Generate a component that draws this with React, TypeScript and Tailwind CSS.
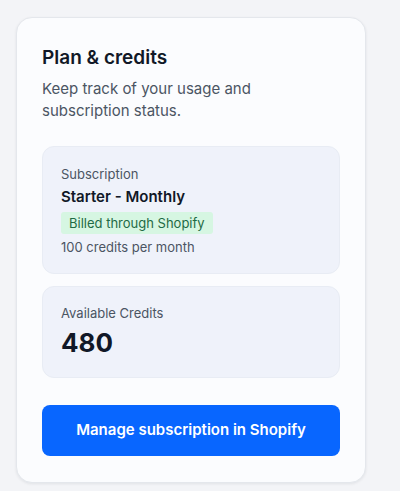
export default function App() {
  return (
    <div
      className="min-h-screen bg-[#f3f4f7] pl-4 pt-[17px]"
      style={{ fontFamily: "Inter, 'Noto Sans', sans-serif" }}
    >
      <div className="w-[350px] rounded-2xl border border-[#e4e7ec] bg-[#fbfcfe] px-[25px] pb-[26px] pt-[26px] shadow-[0_1px_3px_rgba(16,24,40,0.08)]">
        <h2 className="text-[19px] font-semibold leading-7 text-[#111827]">
          Plan &amp; credits
        </h2>
        <p className="mt-[6px] text-[15px] leading-[22px] text-[#4b5563]">
          Keep track of your usage and subscription status.
        </p>

        <div className="mt-[24px] rounded-xl border border-[#e8ecf4] bg-[#eff2fa] px-[18px] pb-[16px] pt-[17px]">
          <div className="text-[13px] leading-5 text-[#4b5563]">Subscription</div>
          <div className="mt-[3px] text-[15px] font-semibold leading-5 text-[#111827]">
            Starter - Monthly
          </div>
          <span className="mt-[5px] inline-block rounded-[3px] bg-[#d6f6e2] px-2 py-[1px] text-[13px] leading-5 text-[#1f6b45]">
            Billed through Shopify
          </span>
          <div className="mt-[3px] text-[13px] leading-5 text-[#4b5563]">
            100 credits per month
          </div>
        </div>

        <div className="mt-3 rounded-xl border border-[#e8ecf4] bg-[#eff2fa] px-[18px] pb-[18px] pt-[16px]">
          <div className="text-[13px] leading-5 text-[#4b5563]">Available Credits</div>
          <div className="mt-[4px] text-[26px] font-bold leading-8 text-[#111827]">480</div>
        </div>

        <button className="mt-[27px] h-[51px] w-full rounded-lg bg-[#0866ff] text-[15px] font-semibold text-white">
          Manage subscription in Shopify
        </button>
      </div>
    </div>
  );
}
